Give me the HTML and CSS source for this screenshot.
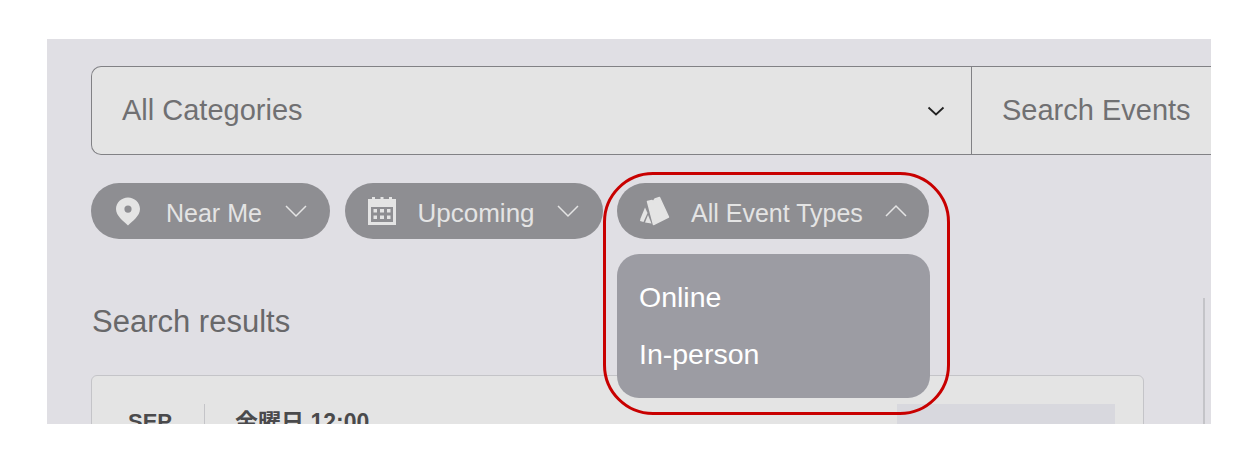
FILE: index.html
```html
<!DOCTYPE html>
<html lang="en">

<head>
  <meta charset="UTF-8">
  <title>Search Events</title>
  <link rel="stylesheet" href="styles.css">
</head>

<body>
  <div class="panel">
    <div class="search-bar">
      <div class="category">
        <span>All Categories</span>
        <svg class="select-arrow" width="18" height="10" viewBox="0 0 18 10">
          <path d="M1.500 1.500L9 8.500L16.500 1.500" fill="none" stroke="#222" stroke-width="1.800" />
        </svg>
      </div>
      <div class="search-input">Search Events</div>
    </div>

    <div class="filters">
      <div class="pill pill-near">
        <svg class="pill-icon" width="26" height="30" viewBox="0 0 26 30">
          <path fill-rule="evenodd" fill="#e4e4e4"
            d="M13 1.500C6.600 1.500 1 6.500 1 13C1 20 8.500 25 13 29.500C17.500 25 25 20 25 13C25 6.500 19.400 1.500 13 1.500ZM13 9.500A3.600 3.600 0 1 1 13 16.700A3.600 3.600 0 1 1 13 9.500Z" />
        </svg>
        <span class="pill-label">Near Me</span>
        <svg class="chevron" width="24" height="14" viewBox="0 0 24 14">
          <path d="M2 2L12 12L22 2" fill="none" stroke="#e4e4e4" stroke-width="1.500" />
        </svg>
      </div>

      <div class="pill pill-upcoming">
        <svg class="pill-icon" width="30" height="30" viewBox="0 0 30 30">
          <path fill-rule="evenodd" fill="#e4e4e4"
            d="M1 3H5V1H8V3H13.500V1H16.500V3H22V1H25V3H29V29H1ZM4 11V26H26V11ZM6.500 13H10V16.500H6.500ZM13 13H17V16.500H13ZM20 13H23.500V16.500H20ZM6.500 19.500H10V23H6.500ZM13 19.500H17V23H13ZM20 19.500H23.500V23H20Z" />
        </svg>
        <span class="pill-label">Upcoming</span>
        <svg class="chevron" width="24" height="14" viewBox="0 0 24 14">
          <path d="M2 2L12 12L22 2" fill="none" stroke="#e4e4e4" stroke-width="1.500" />
        </svg>
      </div>

      <div class="type-filter">
        <div class="pill pill-types">
          <svg class="pill-icon" width="32" height="30" viewBox="0 0 32 30">
            <path fill="#e4e4e4" stroke="#e4e4e4" stroke-width="1.500" stroke-linejoin="round"
              d="M9.500 5.500L14 4.500L15 6L17 3L21.500 1.500L30.500 21L15.500 28.500Z" />
            <path fill="#e4e4e4" d="M7 11.500L9.500 17L5.500 26L2 25L2.500 22.500Z" />
            <path fill="#e4e4e4" d="M10 19L13.500 27.500L7 26.500Z" />
          </svg>
          <span class="pill-label">All Event Types</span>
          <svg class="chevron" width="24" height="14" viewBox="0 0 24 14">
            <path d="M2 12L12 2L22 12" fill="none" stroke="#e4e4e4" stroke-width="1.500" />
          </svg>
        </div>
        <div class="type-menu">
          <div class="type-option">Online</div>
          <div class="type-option">In-person</div>
        </div>
        <div class="highlight-ring"></div>
      </div>
    </div>

    <div class="results-row">
      <div class="results">
        <h2 class="results-title">Search results</h2>
        <div class="event-card">
          <div class="event-month">SEP</div>
          <div class="event-time">金曜日 12:00</div>
          <div class="event-thumb"></div>
        </div>
      </div>
      <div class="scroll-line"></div>
    </div>
  </div>
</body>

</html>
```

FILE: styles.css
```css
body {
  margin: 0;
  background: #fff;
  font-family: "Liberation Sans", Arial, sans-serif;
}

.panel {
  width: 1164px;
  height: 385px;
  margin: 39px 0 0 47px;
  padding: 27px 0 0 44px;
  box-sizing: border-box;
  background: #e0dfe4;
  overflow: hidden;
}

.search-bar {
  display: flex;
  height: 89px;
  background: #e4e4e4;
  border: 1px solid #818185;
  border-right: 0;
  border-radius: 10px 0 0 10px;
  box-sizing: border-box;
  font-size: 29px;
  color: #707072;
}

.category {
  flex: 1;
  display: flex;
  align-items: center;
  justify-content: space-between;
  padding: 0 26px 0 30px;
}

.search-input {
  width: 240px;
  display: flex;
  align-items: center;
  padding-left: 30px;
  box-sizing: border-box;
  border-left: 1px solid #818185;
}

.filters {
  display: flex;
  gap: 14.5px;
  margin-top: 28px;
}

.pill {
  display: flex;
  align-items: center;
  height: 56px;
  border-radius: 28px;
  background: #8e8e92;
  color: #e4e4e4;
  font-size: 25px;
  box-sizing: border-box;
}

.pill-near {
  width: 239px;
  padding-left: 24px;
}

.pill-upcoming {
  width: 258px;
  padding-left: 22px;
}

.pill-types {
  width: 312px;
  padding-left: 21px;
}

.pill-label {
  padding-top: 4px;
  margin-right: 21px;
}

.pill-near .pill-label {
  margin-left: 25px;
  margin-right: 22px;
}

.pill-upcoming .pill-label {
  margin-left: 21px;
  font-size: 26px;
}

.pill-types .pill-label {
  margin-left: 21px;
}

.type-filter {
  position: relative;
  z-index: 1;
}

.type-menu {
  position: absolute;
  top: 71px;
  left: 0;
  width: 313px;
  height: 144px;
  padding-top: 15px;
  box-sizing: border-box;
  background: #9c9ca3;
  border-radius: 22px;
  color: #fff;
  font-size: 28.5px;
}

.type-option {
  height: 57px;
  line-height: 57px;
  padding-left: 22px;
}

.highlight-ring {
  position: absolute;
  top: -11px;
  left: -14px;
  width: 347px;
  height: 243px;
  box-sizing: border-box;
  border: 3px solid #c80000;
  border-radius: 50px;
}

.results-row {
  display: flex;
}

.results {
  width: 1053px;
  padding-top: 63px;
}

.results-title {
  margin: 0 0 0 1px;
  height: 73px;
  font-size: 31px;
  line-height: 40px;
  font-weight: normal;
  color: #68686a;
}

.event-card {
  display: flex;
  height: 120px;
  padding-top: 28px;
  box-sizing: border-box;
  background: #e4e4e4;
  border: 1px solid #c4c4c8;
  border-radius: 6px 6px 0 0;
  font-family: "Liberation Sans", "Noto Sans CJK JP", sans-serif;
  color: #4a4a4c;
  font-size: 22px;
  font-weight: bold;
}

.event-month {
  width: 113px;
  height: 60px;
  padding-left: 36px;
  padding-top: 5px;
  box-sizing: border-box;
  border-right: 1px solid #c4c4c8;
}

.event-time {
  margin-top: -1px;
  margin-left: 30px;
  font-size: 23px;
}

.event-thumb {
  width: 218px;
  height: 80px;
  margin-left: auto;
  margin-right: 28px;
  background: #d8d8de;
}

.scroll-line {
  width: 2px;
  height: 130px;
  margin-left: 59px;
  margin-top: 59px;
  background: #c4c4c8;
}
```
